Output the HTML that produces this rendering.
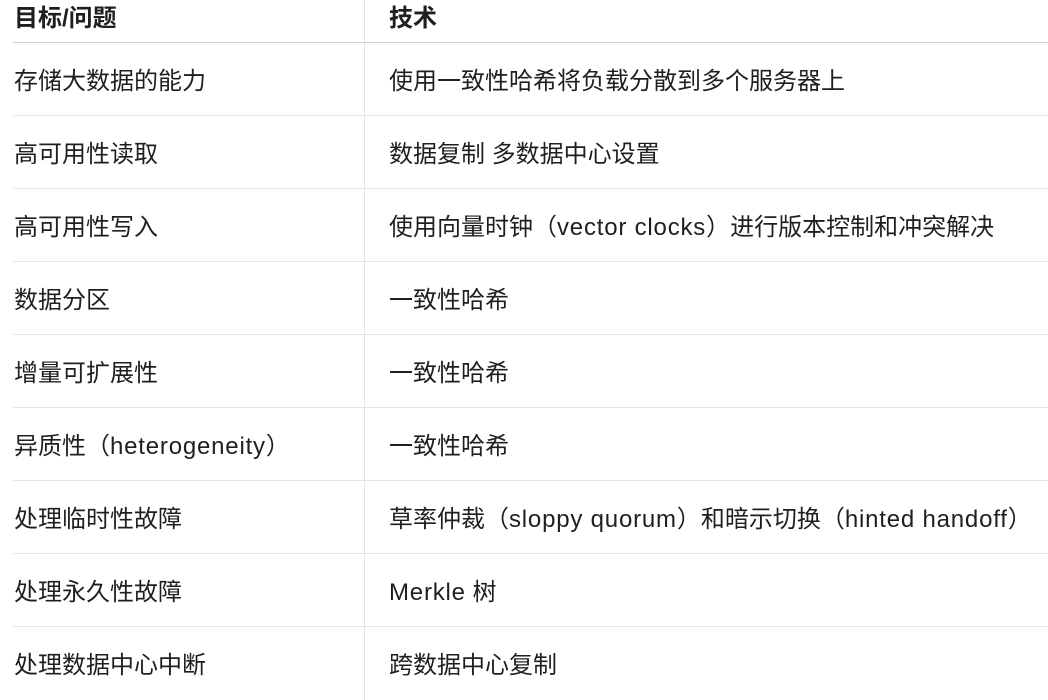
<!DOCTYPE html>
<html><head><meta charset="utf-8"><style>
html,body{margin:0;padding:0;background:#fff;width:1048px;height:698px;overflow:hidden}
body{font-family:"Liberation Sans","Noto Sans CJK SC",sans-serif;color:#1f1f1f;font-size:24px}
table{position:absolute;left:13px;top:0;border-collapse:collapse;width:1040px}
td,th{padding:0;text-align:left;vertical-align:middle}
th{height:42px;border-bottom:1px solid #cfcfcf;font-weight:bold;vertical-align:top;line-height:37px}
td{height:73px;border-bottom:1px solid #e5e5e5;padding-bottom:2px;box-sizing:border-box}
.c1{width:350px;padding-left:1px;border-right:1px solid #e5e5e5}
.c2{padding-left:24px}
.l{letter-spacing:0.8px}
</style></head><body>
<table>
<tr><th class="c1">目标/问题</th><th class="c2">技术</th></tr>
<tr><td class="c1">存储大数据的能力</td><td class="c2">使用一致性哈希将负载分散到多个服务器上</td></tr>
<tr><td class="c1">高可用性读取</td><td class="c2">数据复制 多数据中心设置</td></tr>
<tr><td class="c1">高可用性写入</td><td class="c2">使用向量时钟（<span class="l">vector clocks</span>）进行版本控制和冲突解决</td></tr>
<tr><td class="c1">数据分区</td><td class="c2">一致性哈希</td></tr>
<tr><td class="c1">增量可扩展性</td><td class="c2">一致性哈希</td></tr>
<tr><td class="c1">异质性（<span class="l">heterogeneity</span>）</td><td class="c2">一致性哈希</td></tr>
<tr><td class="c1">处理临时性故障</td><td class="c2">草率仲裁（<span class="l">sloppy quorum</span>）和暗示切换（<span class="l">hinted handoff</span>）</td></tr>
<tr><td class="c1">处理永久性故障</td><td class="c2"><span class="l">Merkle</span> 树</td></tr>
<tr><td class="c1" style="border-bottom:none">处理数据中心中断</td><td class="c2" style="border-bottom:none">跨数据中心复制</td></tr>
</table>
</body></html>
